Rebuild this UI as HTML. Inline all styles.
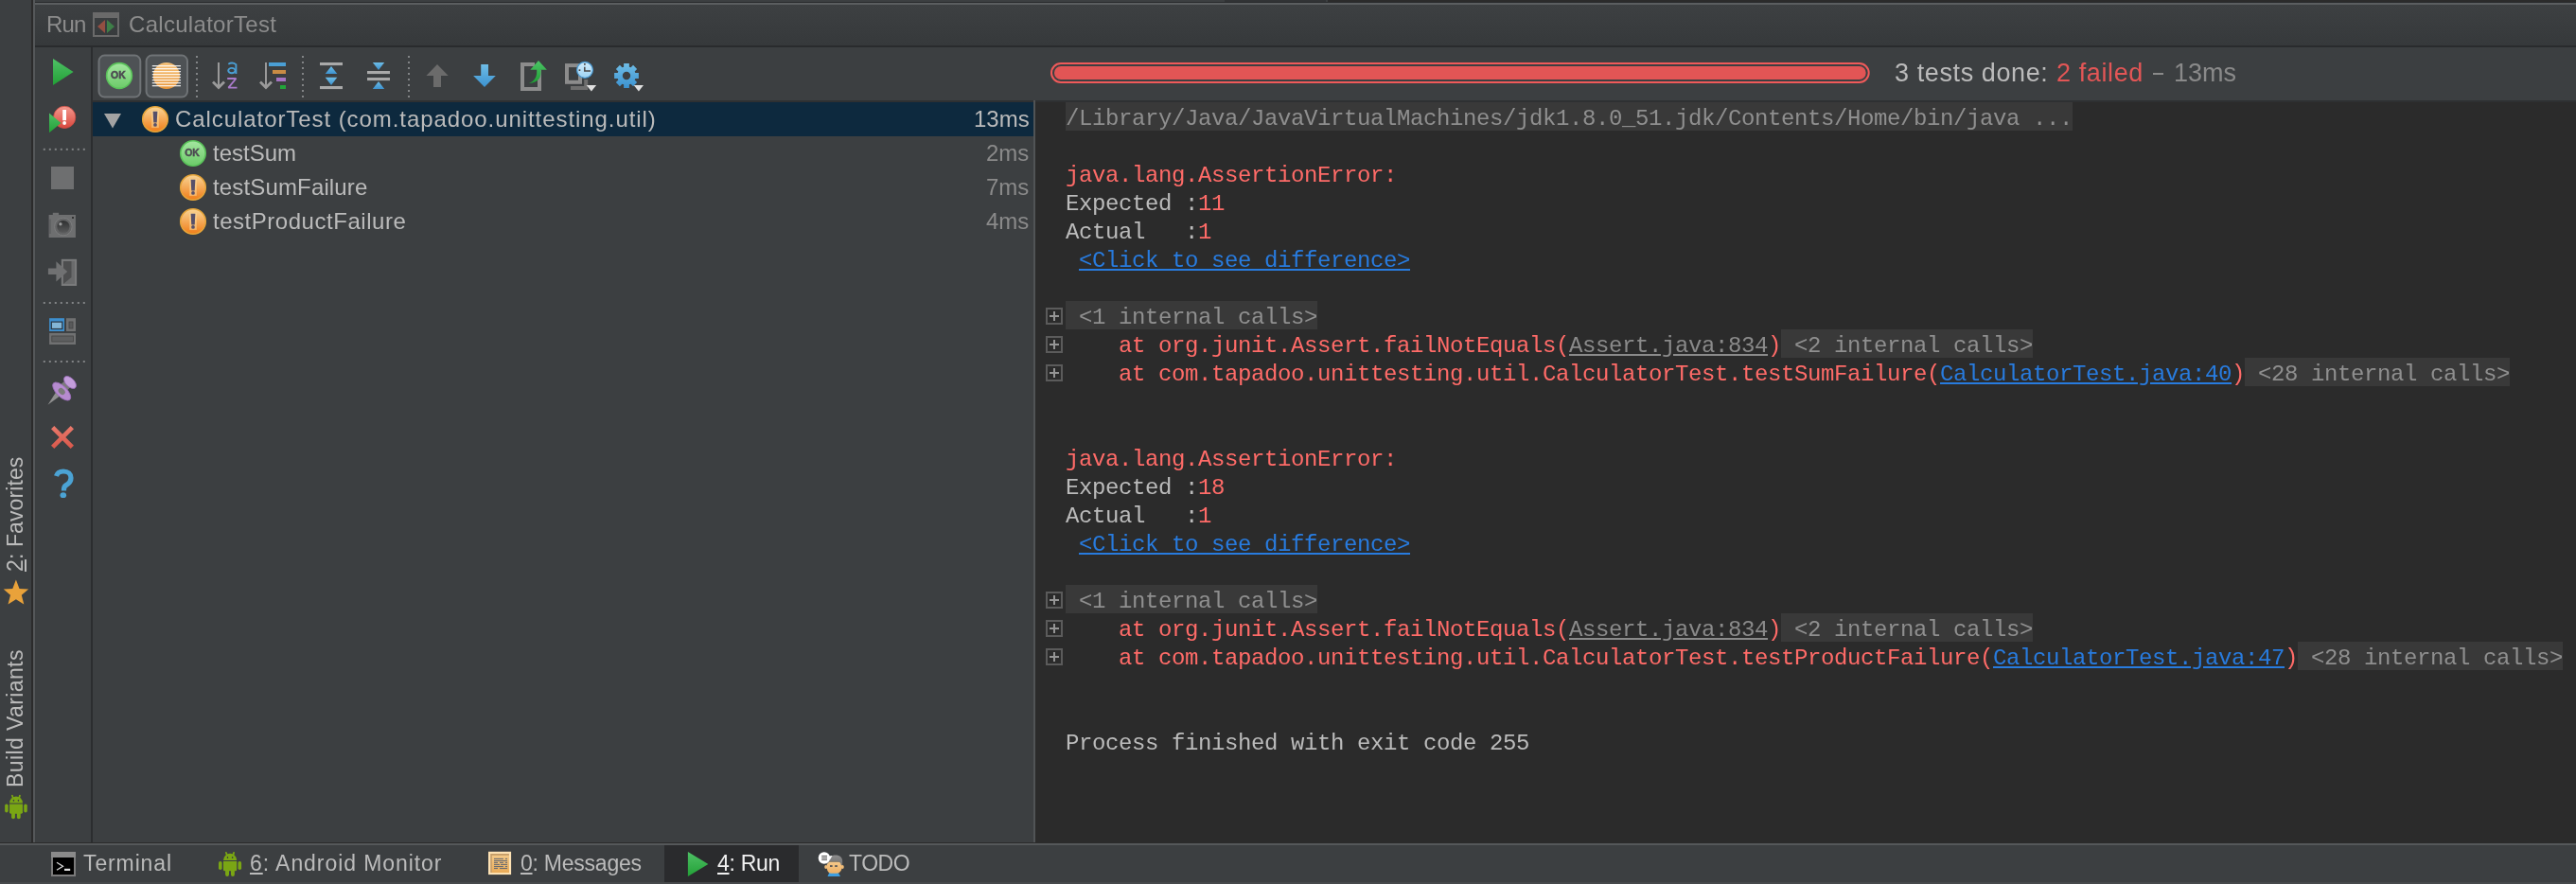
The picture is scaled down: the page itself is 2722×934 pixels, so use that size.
<!DOCTYPE html>
<html><head><meta charset="utf-8"><style>
html,body{margin:0;padding:0;}
body{width:2722px;height:934px;overflow:hidden;position:relative;background:#3c3f41;}
.t,.ln{will-change:transform;}
.a{position:absolute;}
.t{position:absolute;white-space:pre;font-family:"Liberation Sans",sans-serif;font-size:24px;line-height:24px;color:#bbbbbb;}
.ln{position:absolute;height:30px;white-space:pre;font-family:"Liberation Mono",monospace;font-size:24px;letter-spacing:-0.402px;line-height:30px;color:#bbbbbb;}
.ln .r,.ln.r{color:#ff6b68;}
.lk{color:#287bde;text-decoration:underline;text-decoration-thickness:2px;text-underline-offset:2px;}
.gl{color:#8a8a8a;text-decoration:underline;text-decoration-thickness:2px;text-underline-offset:2px;}
.fd{color:#8f8f8f;}
u{text-decoration-thickness:2px;text-underline-offset:2px;}
</style></head>
<body>
<div class="a" style="left:37px;top:0;width:1257px;height:2px;background:#3c3f41"></div>
<div class="a" style="left:1294px;top:0;width:107px;height:2px;background:#313335"></div>
<div class="a" style="left:1403px;top:0;width:1319px;height:2px;background:#2b2b2b"></div>
<div class="a" style="left:37px;top:2px;width:2685px;height:1px;background:#2a2c2e"></div>
<div class="a" style="left:37px;top:3px;width:2685px;height:2px;background:#5b5e60"></div>
<div class="a" style="left:37px;top:5px;width:2685px;height:43px;background:linear-gradient(#3d4042,#36393b)"></div>
<div class="a" style="left:37px;top:48px;width:2685px;height:2px;background:#292b2d"></div>
<div class="a" style="left:33px;top:0;width:2px;height:890px;background:#2b2b2b"></div>
<div class="a" style="left:35px;top:0;width:2px;height:890px;background:#55585a"></div>
<div class="a" style="left:96px;top:50px;width:2px;height:840px;background:#2b2d2f"></div>
<div class="a" style="left:98px;top:106px;width:2624px;height:2px;background:#2e3032"></div>
<div class="a" style="left:98px;top:108px;width:994px;height:36px;background:#0d293e"></div>
<div class="a" style="left:1092px;top:106px;width:2px;height:784px;background:#515456"></div>
<div class="a" style="left:1094px;top:108px;width:1628px;height:782px;background:#2b2b2b"></div>
<div class="a" style="left:0;top:890px;width:2722px;height:1px;background:#2b2b2b"></div>
<div class="a" style="left:0;top:891px;width:2722px;height:2px;background:#55585a"></div>
<div class="a" style="left:702px;top:893px;width:142px;height:39px;background:#2a2b2d"></div>
<div class="a" style="left:0;top:932px;width:2722px;height:2px;background:#46494b"></div>
<div class="a" style="left:1126.00px;top:108px;width:1064.00px;height:30px;background:#393939"></div>
<div class="ln " style="left:1126px;top:111px"><span class="fd">/Library/Java/JavaVirtualMachines/jdk1.8.0_51.jdk/Contents/Home/bin/java ...</span></div>
<div class="ln r" style="left:1126px;top:171px">java.lang.AssertionError:</div>
<div class="ln " style="left:1126px;top:201px">Expected :<span class="r">11</span></div>
<div class="ln " style="left:1126px;top:231px">Actual   :<span class="r">1</span></div>
<div class="ln " style="left:1126px;top:261px"> <span class="lk">&lt;Click to see difference&gt;</span></div>
<div class="a" style="left:1126.00px;top:318px;width:266.00px;height:30px;background:#393939"></div>
<div class="ln " style="left:1126px;top:321px"><span class="fd"> &lt;1 internal calls&gt;</span></div>
<div class="a" style="left:1882.00px;top:348px;width:266.00px;height:30px;background:#393939"></div>
<div class="ln r" style="left:1126px;top:351px">    at org.junit.Assert.failNotEquals(<span class="gl">Assert.java:834</span>)<span class="fd"> &lt;2 internal calls&gt;</span></div>
<div class="a" style="left:2372.00px;top:378px;width:280.00px;height:30px;background:#393939"></div>
<div class="ln r" style="left:1126px;top:381px">    at com.tapadoo.unittesting.util.CalculatorTest.testSumFailure(<span class="lk">CalculatorTest.java:40</span>)<span class="fd"> &lt;28 internal calls&gt;</span></div>
<div class="ln r" style="left:1126px;top:471px">java.lang.AssertionError:</div>
<div class="ln " style="left:1126px;top:501px">Expected :<span class="r">18</span></div>
<div class="ln " style="left:1126px;top:531px">Actual   :<span class="r">1</span></div>
<div class="ln " style="left:1126px;top:561px"> <span class="lk">&lt;Click to see difference&gt;</span></div>
<div class="a" style="left:1126.00px;top:618px;width:266.00px;height:30px;background:#393939"></div>
<div class="ln " style="left:1126px;top:621px"><span class="fd"> &lt;1 internal calls&gt;</span></div>
<div class="a" style="left:1882.00px;top:648px;width:266.00px;height:30px;background:#393939"></div>
<div class="ln r" style="left:1126px;top:651px">    at org.junit.Assert.failNotEquals(<span class="gl">Assert.java:834</span>)<span class="fd"> &lt;2 internal calls&gt;</span></div>
<div class="a" style="left:2428.00px;top:678px;width:280.00px;height:30px;background:#393939"></div>
<div class="ln r" style="left:1126px;top:681px">    at com.tapadoo.unittesting.util.CalculatorTest.testProductFailure(<span class="lk">CalculatorTest.java:47</span>)<span class="fd"> &lt;28 internal calls&gt;</span></div>
<div class="ln " style="left:1126px;top:771px">Process finished with exit code 255</div>
<div class="t" style="left:49px;top:14px;color:#8c8c8c;letter-spacing:-0.8px">Run</div>
<div class="t" style="left:136px;top:14px;color:#8c8c8c;letter-spacing:0.3px">CalculatorTest</div>
<div class="t" style="left:185px;top:114px;letter-spacing:0.93px">CalculatorTest (com.tapadoo.unittesting.util)</div>
<div class="t" style="left:225px;top:150px;">testSum</div>
<div class="t" style="left:225px;top:186px;letter-spacing:0.15px">testSumFailure</div>
<div class="t" style="left:225px;top:222px;letter-spacing:0.53px">testProductFailure</div>
<div class="t" style="left:1029px;top:114px;">13ms</div>
<div class="t" style="left:1042px;top:150px;color:#8a8a8a">2ms</div>
<div class="t" style="left:1042px;top:186px;color:#8a8a8a">7ms</div>
<div class="t" style="left:1042px;top:222px;color:#8a8a8a">4ms</div>
<div class="t" style="left:2002px;top:64px;font-size:27px;line-height:27px;letter-spacing:0.6px">3 tests done:</div>
<div class="t" style="left:2173px;top:64px;font-size:27px;line-height:27px;color:#e35656;letter-spacing:0.6px">2 failed</div>
<div class="a" style="left:2275px;top:77px;width:11px;height:2px;background:#8a8a8a"></div>
<div class="t" style="left:2297px;top:64px;font-size:27px;line-height:27px;color:#8a8a8a">13ms</div>
<div class="t" style="left:88px;top:901px;font-size:23px;line-height:23px;letter-spacing:0.88px">Terminal</div>
<div class="t" style="left:264px;top:901px;font-size:23px;line-height:23px;letter-spacing:0.93px"><u>6</u>: Android Monitor</div>
<div class="t" style="left:550px;top:901px;font-size:23px;line-height:23px;letter-spacing:-0.24px"><u>0</u>: Messages</div>
<div class="t" style="left:758px;top:901px;font-size:23px;line-height:23px;color:#f0f0f0;letter-spacing:-0.28px"><u>4</u>: Run</div>
<div class="t" style="left:897px;top:901px;font-size:23px;line-height:23px;letter-spacing:-0.47px">TODO</div>
<div class="t" style="left:5.2px;top:604px;font-size:23px;line-height:23px;letter-spacing:0.1px;transform:rotate(-90deg);transform-origin:0 0"><u>2</u>: Favorites</div>
<div class="t" style="left:5.2px;top:832px;font-size:23px;line-height:23px;letter-spacing:0.4px;transform:rotate(-90deg);transform-origin:0 0">Build Variants</div>
<svg class="a" style="left:0;top:0" width="2722" height="934" viewBox="0 0 2722 934">
<defs>
<linearGradient id="gplay" x1="0" y1="0" x2="0" y2="1"><stop offset="0" stop-color="#4fc166"/><stop offset="1" stop-color="#22a036"/></linearGradient>
<linearGradient id="gred" x1="0" y1="0" x2="0" y2="1"><stop offset="0" stop-color="#f39a8f"/><stop offset="1" stop-color="#d9473d"/></linearGradient>
<linearGradient id="gok" x1="0" y1="0" x2="0" y2="1"><stop offset="0" stop-color="#a4e6a0"/><stop offset="1" stop-color="#6ccb69"/></linearGradient>
<linearGradient id="gwarn" x1="0" y1="0" x2="0" y2="1"><stop offset="0" stop-color="#f9d596"/><stop offset="1" stop-color="#f07d18"/></linearGradient>
<linearGradient id="gorg" x1="0" y1="0" x2="0" y2="1"><stop offset="0" stop-color="#f6c27a"/><stop offset="1" stop-color="#e8963a"/></linearGradient>
<linearGradient id="gblue" x1="0" y1="0" x2="0" y2="1"><stop offset="0" stop-color="#6fbde6"/><stop offset="1" stop-color="#3b92d0"/></linearGradient>
<linearGradient id="ggreen2" x1="0" y1="0" x2="0" y2="1"><stop offset="0" stop-color="#4cc566"/><stop offset="1" stop-color="#1f9e35"/></linearGradient>
<linearGradient id="gclock" x1="0" y1="0" x2="0" y2="1"><stop offset="0" stop-color="#d2ecfb"/><stop offset="1" stop-color="#9cd2f3"/></linearGradient>
<linearGradient id="gxred" x1="0" y1="0" x2="0" y2="1"><stop offset="0" stop-color="#ea7a6c"/><stop offset="1" stop-color="#d8574a"/></linearGradient>
<linearGradient id="gmsg" x1="0" y1="0" x2="0" y2="1"><stop offset="0" stop-color="#f4c987"/><stop offset="1" stop-color="#e9ab58"/></linearGradient>
<linearGradient id="gface" x1="0" y1="0" x2="0" y2="1"><stop offset="0" stop-color="#f6c98a"/><stop offset="1" stop-color="#edb065"/></linearGradient>
<linearGradient id="ghair" x1="0" y1="0" x2="0" y2="1"><stop offset="0" stop-color="#8e8e8e"/><stop offset="1" stop-color="#6f6f6f"/></linearGradient>
<linearGradient id="glens" x1="0" y1="0" x2="0" y2="1"><stop offset="0" stop-color="#2e2f30"/><stop offset="1" stop-color="#5a5b5c"/></linearGradient>
</defs>
<rect x="99" y="14" width="26" height="24" fill="none" stroke="#6a6a6a" stroke-width="2"/>
<rect x="98" y="13" width="28" height="6" fill="#6a6a6a"/>
<polygon points="103,28 111,21 111,35" fill="#934f42"/>
<polygon points="121,28 113,21 113,35" fill="#3e7f48"/>
<polygon points="56,62 77.6,76 56,90" fill="url(#gplay)"/>
<circle cx="68.2" cy="123.9" r="11.6" fill="url(#gred)" stroke="#d24c44" stroke-width="0.8"/>
<rect x="66.2" y="116" width="3.8" height="11.2" fill="#fff"/>
<circle cx="68.1" cy="130" r="1.9" fill="#fff"/>
<polygon points="52,119.6 64.5,130 52,140.3" fill="url(#gplay)"/>
<rect x="45.8" y="156.8" width="2" height="2" fill="#828486"/>
<rect x="51.8" y="156.8" width="2" height="2" fill="#828486"/>
<rect x="57.8" y="156.8" width="2" height="2" fill="#828486"/>
<rect x="63.8" y="156.8" width="2" height="2" fill="#828486"/>
<rect x="69.8" y="156.8" width="2" height="2" fill="#828486"/>
<rect x="75.8" y="156.8" width="2" height="2" fill="#828486"/>
<rect x="81.8" y="156.8" width="2" height="2" fill="#828486"/>
<rect x="87.8" y="156.8" width="2" height="2" fill="#828486"/>
<rect x="45.8" y="319" width="2" height="2" fill="#828486"/>
<rect x="51.8" y="319" width="2" height="2" fill="#828486"/>
<rect x="57.8" y="319" width="2" height="2" fill="#828486"/>
<rect x="63.8" y="319" width="2" height="2" fill="#828486"/>
<rect x="69.8" y="319" width="2" height="2" fill="#828486"/>
<rect x="75.8" y="319" width="2" height="2" fill="#828486"/>
<rect x="81.8" y="319" width="2" height="2" fill="#828486"/>
<rect x="87.8" y="319" width="2" height="2" fill="#828486"/>
<rect x="45.8" y="381" width="2" height="2" fill="#828486"/>
<rect x="51.8" y="381" width="2" height="2" fill="#828486"/>
<rect x="57.8" y="381" width="2" height="2" fill="#828486"/>
<rect x="63.8" y="381" width="2" height="2" fill="#828486"/>
<rect x="69.8" y="381" width="2" height="2" fill="#828486"/>
<rect x="75.8" y="381" width="2" height="2" fill="#828486"/>
<rect x="81.8" y="381" width="2" height="2" fill="#828486"/>
<rect x="87.8" y="381" width="2" height="2" fill="#828486"/>
<rect x="54" y="176" width="24" height="24" fill="#6e6f70"/>
<rect x="51.6" y="227" width="28.3" height="24" fill="#6e6f70"/>
<rect x="55.8" y="224.8" width="6.3" height="2.5" fill="#6e6f70"/>
<rect x="52.2" y="231.5" width="1.6" height="15.5" fill="#5f6061"/>
<circle cx="66.9" cy="239.5" r="9.3" fill="#636465" stroke="#7c7d7e" stroke-width="1"/>
<circle cx="66.9" cy="239.5" r="6.6" fill="url(#glens)"/>
<circle cx="63.9" cy="236.8" r="1.7" fill="#9a9b9c"/>
<rect x="76" y="229" width="2" height="2" fill="#333"/>
<rect x="65.8" y="274.8" width="14.3" height="26.2" fill="#6a6b6c" stroke="#7a7b7c" stroke-width="2"/>
<polygon points="66.9,276 75.5,276 75.5,293 66.9,300" fill="#4d4e4f"/>
<polygon points="50.9,283.6 59.4,283.6 59.4,276.2 71.2,286.9 59.4,297.6 59.4,290 50.9,290" fill="#707172"/>
<rect x="52.1" y="336.2" width="15.9" height="13.8" fill="#3d8fcf"/>
<rect x="54.3" y="340.1" width="11.5" height="7.4" fill="#84b6d6" stroke="#2a3540" stroke-width="1.2"/>
<rect x="70" y="336.2" width="10" height="13.8" fill="#707172"/>
<rect x="73" y="340" width="4" height="7" fill="#58595a" stroke="#444" stroke-width="0.8"/>
<rect x="52.1" y="351.9" width="27.9" height="12.1" fill="#707172"/>
<rect x="54.8" y="355" width="22.6" height="6" fill="#5e5f60" stroke="#444" stroke-width="0.8"/>
<polygon points="50.5,427.8 60,413 64.5,417.5" fill="#8f8f8f"/>
<polygon points="64,406.5 70.5,400.5 76.5,406.5 70.5,413" fill="#7b7b7b"/>
<ellipse cx="65.2" cy="413.5" rx="12.3" ry="5.6" transform="rotate(45 65.2 413.5)" fill="#b68bd0" stroke="#9a6bb8" stroke-width="0.8"/>
<ellipse cx="65.2" cy="413.5" rx="4" ry="3" transform="rotate(45 65.2 413.5)" fill="#7b7b7b"/>
<ellipse cx="74" cy="404" rx="8" ry="4.5" transform="rotate(45 74 404)" fill="#c39ddb" stroke="#9a6bb8" stroke-width="0.8"/>
<path d="M54 453.3 L57.3 450 L66 458.7 L74.7 450 L78 453.3 L69.3 462 L78 470.7 L74.7 474 L66 465.3 L57.3 474 L54 470.7 L62.7 462 Z" fill="url(#gxred)"/>
<path d="M59.5 503 C60.5 499.5 63.5 498 67 498 C72 498 75 501 75 505 C75 509 72.5 511 70 512.5 C68 513.8 67.5 515 67.5 517 L67.5 518.5" fill="none" stroke="#4ba3d4" stroke-width="5.2" stroke-linecap="butt"/>
<ellipse cx="66.8" cy="523.2" rx="3.3" ry="2.9" fill="#4ba3d4"/>
<rect x="104.5" y="58.6" width="43.8" height="44" rx="6" fill="#4e5255" stroke="#6f7376" stroke-width="2"/>
<rect x="154.6" y="58.6" width="43.4" height="44" rx="6" fill="#4e5255" stroke="#6f7376" stroke-width="2"/>
<circle cx="126" cy="80" r="13.4" fill="url(#gok)" stroke="#5ac25a" stroke-width="1.6"/>
<text x="125" y="82.6" text-anchor="middle" font-family="Liberation Sans" font-weight="bold" font-size="10" transform="translate(125 82.6) scale(1.05 1.0) translate(-125 -82.6)" fill="#4d4a52" stroke="#4d4a52" stroke-width="0.5">OK</text>
<circle cx="175.9" cy="80" r="14.1" fill="url(#gorg)"/>
<rect x="160.8" y="69.0" width="30.2" height="1.3" fill="#ffffff" opacity="0.85"/>
<rect x="160.8" y="72.0" width="30.2" height="1.3" fill="#ffffff" opacity="0.85"/>
<rect x="160.8" y="75.0" width="30.2" height="1.3" fill="#ffffff" opacity="0.85"/>
<rect x="160.8" y="78.0" width="30.2" height="1.3" fill="#ffffff" opacity="0.85"/>
<rect x="160.8" y="81.0" width="30.2" height="1.3" fill="#ffffff" opacity="0.85"/>
<rect x="160.8" y="84.0" width="30.2" height="1.3" fill="#ffffff" opacity="0.85"/>
<rect x="160.8" y="87.0" width="30.2" height="1.3" fill="#ffffff" opacity="0.85"/>
<rect x="160.8" y="90.0" width="30.2" height="1.3" fill="#ffffff" opacity="0.85"/>
<rect x="207" y="59" width="2" height="2" fill="#828486"/>
<rect x="207" y="65" width="2" height="2" fill="#828486"/>
<rect x="207" y="71" width="2" height="2" fill="#828486"/>
<rect x="207" y="77" width="2" height="2" fill="#828486"/>
<rect x="207" y="83" width="2" height="2" fill="#828486"/>
<rect x="207" y="89" width="2" height="2" fill="#828486"/>
<rect x="207" y="95" width="2" height="2" fill="#828486"/>
<rect x="207" y="101" width="2" height="2" fill="#828486"/>
<rect x="319" y="59" width="2" height="2" fill="#828486"/>
<rect x="319" y="65" width="2" height="2" fill="#828486"/>
<rect x="319" y="71" width="2" height="2" fill="#828486"/>
<rect x="319" y="77" width="2" height="2" fill="#828486"/>
<rect x="319" y="83" width="2" height="2" fill="#828486"/>
<rect x="319" y="89" width="2" height="2" fill="#828486"/>
<rect x="319" y="95" width="2" height="2" fill="#828486"/>
<rect x="319" y="101" width="2" height="2" fill="#828486"/>
<rect x="431" y="59" width="2" height="2" fill="#828486"/>
<rect x="431" y="65" width="2" height="2" fill="#828486"/>
<rect x="431" y="71" width="2" height="2" fill="#828486"/>
<rect x="431" y="77" width="2" height="2" fill="#828486"/>
<rect x="431" y="83" width="2" height="2" fill="#828486"/>
<rect x="431" y="89" width="2" height="2" fill="#828486"/>
<rect x="431" y="95" width="2" height="2" fill="#828486"/>
<rect x="431" y="101" width="2" height="2" fill="#828486"/>
<path d="M231 66 V91" stroke="#9a9a9a" stroke-width="2" fill="none"/>
<path d="M225 86.5 L231 92.5 L237 86.5" stroke="#9a9a9a" stroke-width="2.8" fill="none"/>
<path d="M241.3 67.8 Q245.5 65.2 249.4 68.2 L249.4 78" stroke="#4a9ed3" stroke-width="1.9" fill="none"/>
<ellipse cx="244.9" cy="74.6" rx="3.7" ry="2.7" stroke="#4a9ed3" stroke-width="1.9" fill="none"/>
<path d="M240.2 83 H249.4 L241.4 92.6 H250.5" stroke="#a97bcb" stroke-width="1.9" fill="none" stroke-linejoin="bevel"/>
<path d="M281 66 V91" stroke="#9a9a9a" stroke-width="2" fill="none"/>
<path d="M275 86.5 L281 92.5 L287 86.5" stroke="#9a9a9a" stroke-width="2.8" fill="none"/>
<rect x="284" y="66" width="18" height="4" fill="#4a9fd5"/>
<rect x="288" y="74" width="14" height="4" fill="#c98b44"/>
<rect x="292" y="82" width="10" height="4" fill="#a673c4"/>
<rect x="296" y="90" width="6" height="4" fill="#22a53a"/>
<rect x="338" y="66" width="24" height="3.1" fill="#a9a9a9"/>
<rect x="338" y="91" width="24" height="3.1" fill="#a9a9a9"/>
<polygon points="350,70 356.3,78.1 343.7,78.1" fill="url(#gblue)"/>
<polygon points="343.7,81.8 356.3,81.8 350,90" fill="url(#gblue)"/>
<rect x="388" y="75" width="24" height="3.1" fill="#a9a9a9"/>
<rect x="388" y="82" width="24" height="3.1" fill="#a9a9a9"/>
<polygon points="393.8,66 406.2,66 400,74" fill="url(#gblue)"/>
<polygon points="400,86 406.2,94.1 393.8,94.1" fill="url(#gblue)"/>
<polygon points="462,68 473.7,80 466,80 466,92 458,92 458,80 450.4,80" fill="#6b6b6b"/>
<polygon points="508.2,68 516,68 516,80 523.8,80 512,92 500.1,80 508.2,80" fill="url(#gblue)"/>
<path d="M565 68 H552 V94 H570 V74" fill="none" stroke="#8c8c8c" stroke-width="4"/>
<path d="M558.7 88 C567 87.5 571.6 84 571.6 76 L571.6 73.7 L577.9 73.7 L569 64 L560.3 73.7 L567.2 73.7 L567.2 76 C567.2 82 564 86 558.7 88 Z" fill="url(#ggreen2)"/>
<rect x="599" y="69.1" width="14" height="17.7" fill="none" stroke="#8c8c8c" stroke-width="4"/>
<path d="M603 92.9 H619.2 V84" fill="none" stroke="#6e6e6e" stroke-width="4"/>
<circle cx="618" cy="73.9" r="8.4" fill="url(#gclock)" stroke="#4a98cf" stroke-width="1.3"/>
<path d="M617.8 70.8 V74.9 H624" fill="none" stroke="#4a4747" stroke-width="1.5"/>
<rect x="611.6" y="73.3" width="1.7" height="1.7" fill="#4a4747"/>
<rect x="617" y="67" width="1.7" height="1.7" fill="#4a4747"/>
<polygon points="619.7,90 630.1,90 624.9,96.4" fill="#e0e0e0"/>
<path d="M674.88 77.12 L674.88 82.88 L671.36 82.90 L670.67 84.57 L673.15 87.07 L669.07 91.15 L666.57 88.67 L664.90 89.36 L664.88 92.88 L659.12 92.88 L659.10 89.36 L657.43 88.67 L654.93 91.15 L650.85 87.07 L653.33 84.57 L652.64 82.90 L649.12 82.88 L649.12 77.12 L652.64 77.10 L653.33 75.43 L650.85 72.93 L654.93 68.85 L657.43 71.33 L659.10 70.64 L659.12 67.12 L664.88 67.12 L664.90 70.64 L666.57 71.33 L669.07 68.85 L673.15 72.93 L670.67 75.43 L671.36 77.10 Z M666.2 80 A4.2 4.2 0 1 0 657.8 80 A4.2 4.2 0 1 0 666.2 80 Z" fill="url(#gblue)" fill-rule="evenodd"/>
<polygon points="669.7,90 680,90 674.9,96.4" fill="#e0e0e0"/>
<rect x="1111" y="67" width="863.7" height="20" rx="10" fill="none" stroke="#f05a5a" stroke-width="2"/>
<rect x="1114" y="70" width="857.7" height="14" rx="7" fill="#e25555"/>
<polygon points="110,120 128,120 119,135.5" fill="#a3a3a3"/>
<circle cx="164" cy="126" r="13.3" fill="url(#gwarn)" stroke="#e6a53a" stroke-width="1.5"/>
<rect x="160.2" y="117.1" width="7.6" height="17.8" fill="#fde6b0" opacity="0.45"/>
<path d="M161.6 117.7 H166.4 L165.7 129.6 H162.3 Z" fill="#56506a"/>
<circle cx="164" cy="131.9" r="1.9" fill="#56506a"/>
<circle cx="204" cy="198" r="13.3" fill="url(#gwarn)" stroke="#e6a53a" stroke-width="1.5"/>
<rect x="200.2" y="189.1" width="7.6" height="17.8" fill="#fde6b0" opacity="0.45"/>
<path d="M201.6 189.7 H206.4 L205.7 201.6 H202.3 Z" fill="#56506a"/>
<circle cx="204" cy="203.9" r="1.9" fill="#56506a"/>
<circle cx="204" cy="234" r="13.3" fill="url(#gwarn)" stroke="#e6a53a" stroke-width="1.5"/>
<rect x="200.2" y="225.1" width="7.6" height="17.8" fill="#fde6b0" opacity="0.45"/>
<path d="M201.6 225.7 H206.4 L205.7 237.6 H202.3 Z" fill="#56506a"/>
<circle cx="204" cy="239.9" r="1.9" fill="#56506a"/>
<circle cx="204" cy="162" r="13.2" fill="url(#gok)" stroke="#5ac25a" stroke-width="1.6"/>
<text x="203" y="164.9" text-anchor="middle" font-family="Liberation Sans" font-weight="bold" font-size="10.5" fill="#4d4a52" stroke="#4d4a52" stroke-width="0.45">OK</text>
<rect x="1106" y="326" width="16" height="16" fill="none" stroke="#5b5b5b" stroke-width="2"/>
<path d="M1109 334 H1119 M1114 329 V339" stroke="#959595" stroke-width="2"/>
<rect x="1106" y="356" width="16" height="16" fill="none" stroke="#5b5b5b" stroke-width="2"/>
<path d="M1109 364 H1119 M1114 359 V369" stroke="#959595" stroke-width="2"/>
<rect x="1106" y="386" width="16" height="16" fill="none" stroke="#5b5b5b" stroke-width="2"/>
<path d="M1109 394 H1119 M1114 389 V399" stroke="#959595" stroke-width="2"/>
<rect x="1106" y="626" width="16" height="16" fill="none" stroke="#5b5b5b" stroke-width="2"/>
<path d="M1109 634 H1119 M1114 629 V639" stroke="#959595" stroke-width="2"/>
<rect x="1106" y="656" width="16" height="16" fill="none" stroke="#5b5b5b" stroke-width="2"/>
<path d="M1109 664 H1119 M1114 659 V669" stroke="#959595" stroke-width="2"/>
<rect x="1106" y="686" width="16" height="16" fill="none" stroke="#5b5b5b" stroke-width="2"/>
<path d="M1109 694 H1119 M1114 689 V699" stroke="#959595" stroke-width="2"/>
<rect x="54" y="900" width="26" height="26" fill="#7b7b7b"/>
<rect x="54" y="900" width="26" height="6" fill="#8a8a8a"/>
<rect x="56" y="906" width="22" height="18" fill="#000"/>
<path d="M60 911.2 L66.5 915.2 L60 919.2" stroke="#d8d8d8" stroke-width="1.3" fill="none"/>
<rect x="68" y="917.8" width="6.2" height="2.2" fill="#e0e0e0"/>
<g transform="translate(230.6,900) scale(1.0)" fill="#7aa614"><path d="M5.4 8.9 A7.1 7.1 0 0 1 19.6 8.9 Z"/><path d="M5.4 10 H19.6 V18.8 Q19.6 20.3 18.1 20.3 H6.9 Q5.4 20.3 5.4 18.8 Z"/><rect x="0.4" y="10" width="3.6" height="9" rx="1.8"/><rect x="20.9" y="10" width="3.6" height="9" rx="1.8"/><rect x="7.5" y="17" width="3.9" height="8.9" rx="1.9"/><rect x="13.4" y="17" width="3.9" height="8.9" rx="1.9"/><path d="M8.3 0.8 L9.2 3.5 M16.5 0.8 L15.8 3.5" stroke="#7aa614" stroke-width="1.8" stroke-linecap="round"/><ellipse cx="9.9" cy="6.1" rx="0.75" ry="1" fill="#3c3f41"/><ellipse cx="15" cy="6.1" rx="0.75" ry="1" fill="#3c3f41"/></g>
<rect x="516" y="899.8" width="24.1" height="24.3" fill="#fde2b4"/>
<rect x="518.2" y="902" width="19.7" height="20" fill="#c59c68"/>
<rect x="519.8" y="903.8" width="18.1" height="18.2" fill="url(#gmsg)"/>
<rect x="522" y="906.85" width="9.90" height="1.1" fill="#6a6c70"/>
<rect x="533.9" y="906.85" width="2.20" height="1.1" fill="#6a6c70"/>
<rect x="522" y="908.95" width="14.10" height="1.1" fill="#6a6c70"/>
<rect x="522" y="910.85" width="4.00" height="1.1" fill="#6a6c70"/>
<rect x="528" y="910.85" width="3.90" height="1.1" fill="#6a6c70"/>
<rect x="533.9" y="910.85" width="2.20" height="1.1" fill="#6a6c70"/>
<rect x="522" y="912.85" width="5.90" height="1.1" fill="#6a6c70"/>
<rect x="529" y="912.85" width="7.10" height="1.1" fill="#6a6c70"/>
<rect x="522" y="914.95" width="9.90" height="1.1" fill="#6a6c70"/>
<rect x="533.9" y="914.95" width="2.20" height="1.1" fill="#6a6c70"/>
<rect x="522" y="916.95" width="4.00" height="1.1" fill="#6a6c70"/>
<rect x="528" y="916.95" width="8.10" height="1.1" fill="#6a6c70"/>
<polygon points="726.9,900 748.4,913 726.9,926.1" fill="url(#gplay)"/>
<path d="M874.5 926 L876.5 921.5 L885.5 921.5 L888 926 Z" fill="#3d9ee0"/>
<path d="M873.8 910.5 H889.5 V916.5 C889.5 919 888.5 920.5 886.5 922.2 L884 922.7 H878 L875.8 922 C874.5 920.5 873.8 919 873.8 916.5 Z" fill="url(#gface)"/>
<ellipse cx="872.8" cy="916" rx="1.6" ry="2" fill="#f0bc78"/>
<ellipse cx="890.2" cy="916" rx="1.6" ry="2" fill="#f0bc78"/>
<path d="M874 912 C874 906 878 903.5 883 903.5 C887.5 903.5 890.2 906 890.2 910 L890.2 914 L888.8 914 C888.3 911.5 887 910.3 885 910.3 L876 910.3 L874.8 913 Z" fill="url(#ghair)"/>
<rect x="877" y="914.1" width="2.6" height="1.9" fill="#5d5a57"/>
<rect x="882.2" y="914.1" width="2.6" height="1.9" fill="#5d5a57"/>
<path d="M876 904.5 L879.5 904 L877 908.5 Z" fill="#ffffff"/>
<circle cx="870.9" cy="906.5" r="6.2" fill="#ffffff"/>
<path d="M868.2 904.5 H874 M868.2 906.5 H874 M868.2 908.4 H874" stroke="#3a3a3a" stroke-width="0.9"/>
<polygon points="16.9,612.5 20.5,622 30.1,622.5 22.8,628.8 25.3,638.6 16.9,633.2 8.5,638.6 11,628.8 3.7,622.5 13.3,622" fill="#e9a23a"/>
<g transform="translate(4.75,839.8) scale(0.98)" fill="#7aa614"><path d="M5.4 8.9 A7.1 7.1 0 0 1 19.6 8.9 Z"/><path d="M5.4 10 H19.6 V18.8 Q19.6 20.3 18.1 20.3 H6.9 Q5.4 20.3 5.4 18.8 Z"/><rect x="0.4" y="10" width="3.6" height="9" rx="1.8"/><rect x="20.9" y="10" width="3.6" height="9" rx="1.8"/><rect x="7.5" y="17" width="3.9" height="8.9" rx="1.9"/><rect x="13.4" y="17" width="3.9" height="8.9" rx="1.9"/><path d="M8.3 0.8 L9.2 3.5 M16.5 0.8 L15.8 3.5" stroke="#7aa614" stroke-width="1.8" stroke-linecap="round"/><ellipse cx="9.9" cy="6.1" rx="0.75" ry="1" fill="#3c3f41"/><ellipse cx="15" cy="6.1" rx="0.75" ry="1" fill="#3c3f41"/></g>
</svg>
</body></html>
